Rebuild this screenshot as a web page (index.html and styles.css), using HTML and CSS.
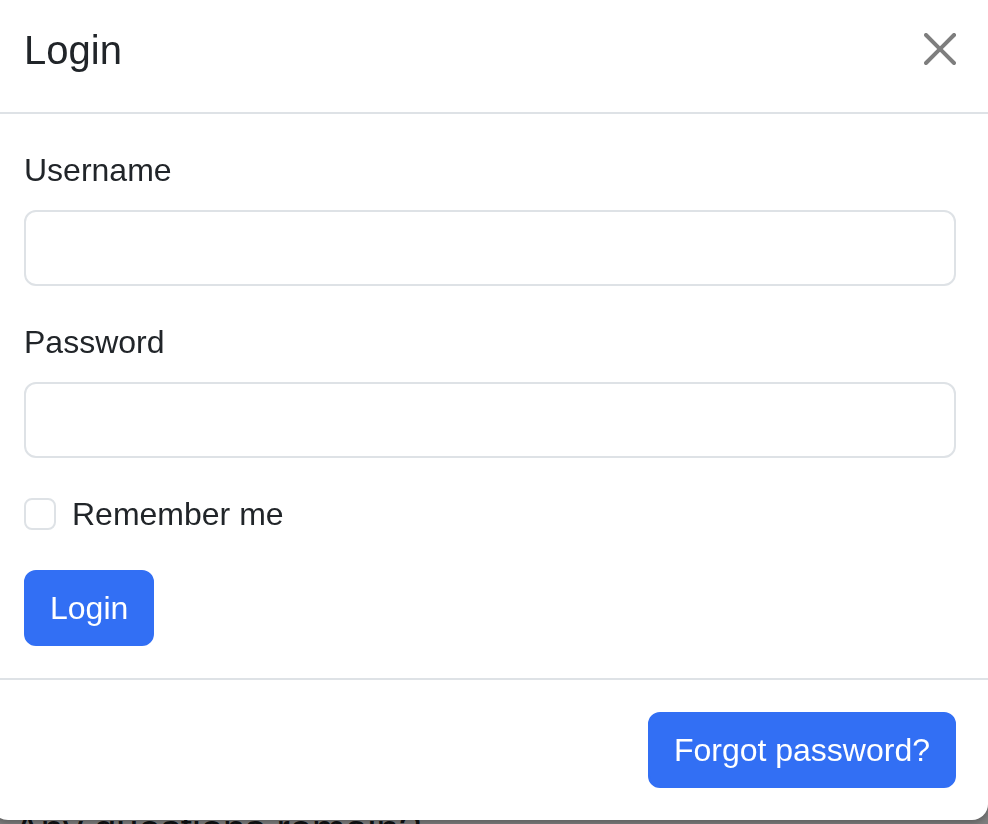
FILE: index.html
```html
<!DOCTYPE html>
<html lang="en">
<head>
<meta charset="utf-8">
<title>Login</title>
<link rel="stylesheet" href="styles.css">
</head>
<body>
<main class="page">
  <h2 class="page-heading">Any questions remain?</h2>
</main>
<div class="backdrop"></div>
<div class="modal" role="dialog" aria-labelledby="login-title">
  <div class="modal-header">
    <h5 class="modal-title" id="login-title">Login</h5>
    <button class="btn-close" type="button" aria-label="Close">
      <svg viewBox="0 0 16 16" width="32" height="32" aria-hidden="true"><path d="M.293.293a1 1 0 0 1 1.414 0L8 6.586 14.293.293a1 1 0 1 1 1.414 1.414L9.414 8l6.293 6.293a1 1 0 0 1-1.414 1.414L8 9.414l-6.293 6.293a1 1 0 0 1-1.414-1.414L6.586 8 .293 1.707a1 1 0 0 1 0-1.414z"/></svg>
    </button>
  </div>
  <form class="modal-body">
    <div class="field">
      <label class="form-label" for="username">Username</label>
      <input class="form-control" id="username" type="text">
    </div>
    <div class="field">
      <label class="form-label" for="password">Password</label>
      <input class="form-control" id="password" type="password">
    </div>
    <div class="form-check">
      <input class="form-check-input" id="remember" type="checkbox">
      <label class="form-check-label" for="remember">Remember me</label>
    </div>
    <div>
      <button class="btn btn-primary" type="button">Login</button>
    </div>
  </form>
  <div class="modal-footer">
    <button class="btn btn-primary" type="button">Forgot password?</button>
  </div>
</div>
</body>
</html>
```

FILE: styles.css
```css
* { box-sizing: border-box; }

html, body {
  margin: 0;
  padding: 0;
  height: 100%;
  overflow: hidden;
}

body {
  background: #ffffff;
  color: #212529;
  font-family: "Liberation Sans", Arial, Helvetica, sans-serif;
}

.page {
  padding: 805px 0 0 14px;
}

.page-heading {
  margin: 0;
  font-size: 40px;
  font-weight: 400;
  line-height: 48px;
  color: #212529;
  white-space: nowrap;
}

.backdrop {
  position: fixed;
  inset: 0;
  background: rgba(0, 0, 0, 0.5);
}

.modal {
  position: absolute;
  top: 0;
  left: -8px;
  width: 996px;
  background: #ffffff;
  border-radius: 0 0 16px 16px;
  box-shadow: 0 3px 6px rgba(0, 0, 0, 0.25);
  display: flex;
  flex-direction: column;
}

.modal-header {
  display: flex;
  align-items: center;
  justify-content: space-between;
  padding: 20px 32px 32px 32px;
  border-bottom: 2px solid #dee2e6;
}

.modal-title {
  margin: 0;
  font-size: 40px;
  font-weight: 400;
  line-height: 60px;
}

.btn-close {
  display: flex;
  align-items: center;
  justify-content: center;
  width: 32px;
  height: 32px;
  padding: 0;
  margin-top: -2px;
  border: 0;
  background: transparent;
  fill: #000000;
  opacity: 0.5;
}

.modal-body {
  display: flex;
  flex-direction: column;
  gap: 32px;
  padding: 32px;
  margin: 0;
}

.field {
  display: flex;
  flex-direction: column;
  gap: 16px;
}

.form-label {
  font-size: 32px;
  line-height: 48px;
}

.form-control {
  display: block;
  width: 100%;
  height: 76px;
  padding: 12px 24px;
  font-family: inherit;
  font-size: 32px;
  color: #212529;
  background: #ffffff;
  border: 2px solid #dee2e6;
  border-radius: 12px;
  outline: none;
}

.form-check {
  display: flex;
  align-items: center;
  gap: 16px;
  height: 48px;
}

.form-check-input {
  appearance: none;
  -webkit-appearance: none;
  width: 32px;
  height: 32px;
  margin: 0;
  border: 2px solid #dee2e6;
  border-radius: 8px;
  background: #ffffff;
  flex: none;
}

.form-check-label {
  font-size: 32px;
  line-height: 48px;
}

.btn {
  display: inline-block;
  padding: 12px 24px;
  font-family: inherit;
  font-size: 32px;
  line-height: 48px;
  border: 2px solid transparent;
  border-radius: 12px;
  cursor: pointer;
}

.btn-primary {
  color: #ffffff;
  background: #326ff4;
  border-color: #326ff4;
}

.modal-footer {
  display: flex;
  justify-content: flex-end;
  padding: 32px 32px 32px 32px;
  border-top: 2px solid #dee2e6;
}
```
